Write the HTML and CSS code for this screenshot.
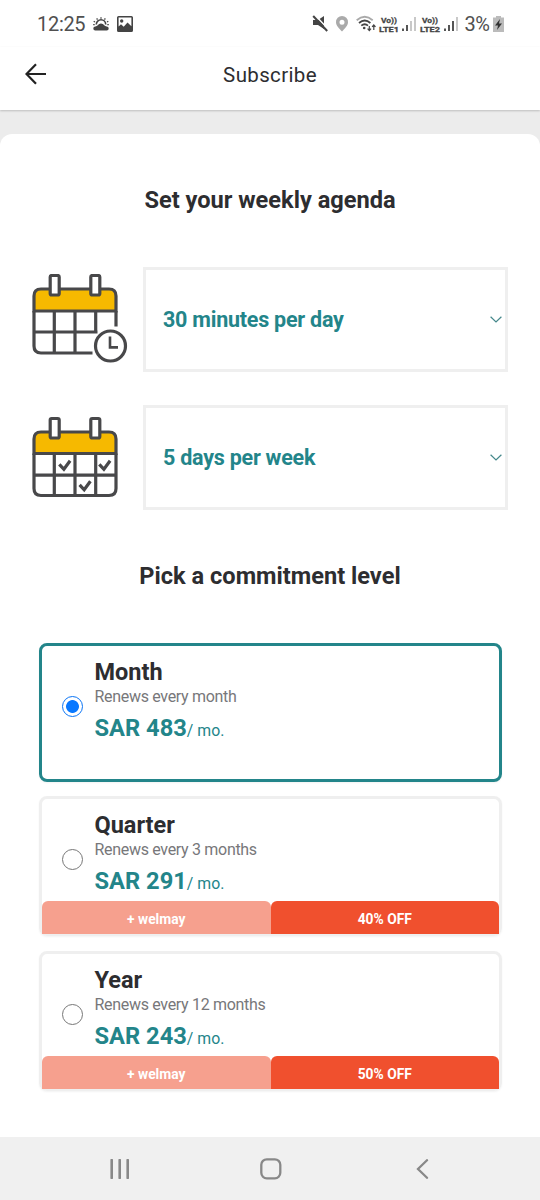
FILE: index.html
```html
<!DOCTYPE html>
<html lang="en">
<head>
<meta charset="utf-8">
<title>Subscribe</title>
<link rel="stylesheet" href="styles.css">
</head>
<body>
<div class="screen">
  <div class="status">
    <span class="clock">12:25</span>
    <svg class="weather" width="18" height="18" viewBox="0 0 18 18"><path d="M3.300 15.500a2 2 0 0 1 0-4c1.200-.2 1.600-.4 2.400-1.200a4 4 0 0 1 6.600 0c.8.800 1.200 1 2.400 1.200a2 2 0 0 1 0 4z" fill="#444"/><path d="M4.300 9.400a4.700 4.700 0 0 1 9.400 0" fill="none" stroke="#444" stroke-width="1.600"/><path d="M9 3.700V2.200M5.500 4.600L4.700 3.300M12.500 4.600l.8-1.300M3 7L1.700 6.200M15 7l1.300-.8M2.700 9.700H1.200M15.300 9.700h1.500" stroke="#444" stroke-width="1.300"/></svg>
    <svg class="photo" width="16" height="16" viewBox="0 0 16 16"><path fill="#444" fill-rule="evenodd" d="M1.600 0h12.800Q16 0 16 1.600v12.800q0 1.600-1.600 1.600H1.600Q0 16 0 14.400V1.600Q0 0 1.600 0zM1.600 1.600v8.800L4 8.200l2.700 2.500 3.800-4.200 3.900 3.700V1.600zM3 5a1.700 1.700 0 1 0 3.400 0A1.700 1.700 0 1 0 3 5z"/></svg>
    <span class="spacer"></span>
    <svg class="signals" width="150" height="20" viewBox="312 13 150 20">
      <path d="M313 19h5l6-4v13l-6-4h-5z" fill="#444"/>
      <path d="M314.500 13.500l14 15" stroke="#fff" stroke-width="1.500"/><path d="M313.200 15l14 15" stroke="#444" stroke-width="2"/>
      <path fill="#aaa" fill-rule="evenodd" d="M342 15a6 6 0 0 1 6 6.200c0 3.400-3.300 6.300-6 9.300-2.700-3-6-5.900-6-9.300A6 6 0 0 1 342 15zm0 3.700a2.500 2.500 0 1 0 0 5 2.500 2.500 0 0 0 0-5z"/>
      <g fill="none" stroke-width="1.800"><path d="M356.700 19.200q8-6.800 16 0" stroke="#aaa"/><path d="M359 22q5.700-4.900 11.400 0M361.300 24.600q3.400-2.600 6.700 0" stroke="#444"/></g>
      <circle cx="364.200" cy="27" r="1.300" fill="#444"/>
      <path d="M369.300 25v4.200m-1.700-1.600l1.700 1.900 1.700-1.900M373.800 29v-4.800m-1.700 1.700l1.700-1.900 1.700 1.900" fill="none" stroke="#444" stroke-width="1.200"/>
      <text class="volte" x="381" y="21.600" textLength="16" lengthAdjust="spacingAndGlyphs">Vo))</text><text class="volte" x="379" y="31" textLength="20" lengthAdjust="spacingAndGlyphs">LTE1</text>
      <path d="M403 27.500V30M407 24v6" stroke="#444" stroke-width="1.800"/><path d="M411 20v10M415 16v14" stroke="#bbb" stroke-width="1.600"/>
      <text class="volte" x="422" y="21.600" textLength="16" lengthAdjust="spacingAndGlyphs">Vo))</text><text class="volte" x="420" y="31" textLength="20" lengthAdjust="spacingAndGlyphs">LTE2</text>
      <path d="M445 27.500V30M449 24v6M453 20v10" stroke="#444" stroke-width="1.800"/><path d="M457 16v14" stroke="#bbb" stroke-width="1.600"/>
    </svg>
    <span class="percent">3%</span>
    <svg class="battery" width="11" height="16" viewBox="0 0 11 16"><path d="M3 0h5v1.500h3V16H0V1.500h3z" fill="#bbb"/><path d="M7 3L2 9.500h3L4 14l5-6.500H6z" fill="#333"/></svg>
  </div>
  <header class="appbar">
    <svg class="back" width="22" height="22" viewBox="0 0 22 22"><path d="M21 11H2M11 1.300L1.500 11l9.500 9.700" fill="none" stroke="#222" stroke-width="2.200"/></svg>
    <h1 class="title">Subscribe</h1>
  </header>
  <main class="body">
    <div class="sheet">
      <h2 class="heading">Set your weekly agenda</h2>
      <div class="row">
        <svg class="calendar" width="97" height="92" viewBox="31 274 97 92">
          <g fill="none" stroke="#48484a" stroke-width="3.200">
            <path d="M34 311v-15q0-7 7-7h68q7 0 7 7v15z" fill="#f6b900"/>
            <path d="M116 311v15.500M34 311v35q0 7 7 7h51.500M34 332h63.500M54.300 311v42M75 311v42M95.700 311v22"/>
            <rect x="50.200" y="275.500" width="9" height="19.500" rx="1.500" fill="#fff"/><rect x="90.800" y="275.500" width="9" height="19.500" rx="1.500" fill="#fff"/>
            <circle cx="110.500" cy="346" r="15" fill="#fff"/><path d="M110 336.500V347.400h8" stroke-width="2.600"/>
          </g>
        </svg>
        <div class="select"><span>30 minutes per day</span><svg width="12" height="7" viewBox="0 0 12 7"><path d="M.6.800L6 6 11.400.800" fill="none" stroke="#45888b" stroke-width="1.200"/></svg></div>
      </div>
      <div class="row">
        <svg class="calendar" width="97" height="92" viewBox="31 412 97 92">
          <g fill="none" stroke="#48484a" stroke-width="3.200">
            <path d="M34 453.500v-14.500q0-7 7-7h68q7 0 7 7v14.500z" fill="#f6b900"/>
            <path d="M34 453.500V488.500q0 7 7 7h68q7 0 7-7v-35M34 475.200h82M54.300 453.500v42M75 453.500v42M95.700 453.500v42"/>
            <rect x="50.200" y="418.500" width="9" height="19.500" rx="1.500" fill="#fff"/><rect x="90.800" y="418.500" width="9" height="19.500" rx="1.500" fill="#fff"/>
            <path d="M59.300 464.300l4.600 5 6.200-8.500M99.300 464.300l4.600 5 6.200-8.500M79.600 484.800l4.600 5 6.200-8.500"/>
          </g>
        </svg>
        <div class="select"><span>5 days per week</span><svg width="12" height="7" viewBox="0 0 12 7"><path d="M.6.800L6 6 11.400.800" fill="none" stroke="#45888b" stroke-width="1.200"/></svg></div>
      </div>
      <h2 class="heading second">Pick a commitment level</h2>
      <div class="plan selected">
        <div class="details"><span class="radio"></span><div>
          <h3 class="name">Month</h3><p class="renews">Renews every month</p><p class="price"><b>SAR 483</b>/ mo.</p>
        </div></div>
      </div>
      <div class="plan">
        <div class="details"><span class="radio"></span><div>
          <h3 class="name">Quarter</h3><p class="renews">Renews every 3 months</p><p class="price"><b>SAR 291</b>/ mo.</p>
        </div></div>
        <div class="offers"><span class="bonus">+ welmay</span><span class="discount">40% OFF</span></div>
      </div>
      <div class="plan">
        <div class="details"><span class="radio"></span><div>
          <h3 class="name">Year</h3><p class="renews">Renews every 12 months</p><p class="price"><b>SAR 243</b>/ mo.</p>
        </div></div>
        <div class="offers"><span class="bonus">+ welmay</span><span class="discount">50% OFF</span></div>
      </div>
    </div>
  </main>
  <nav class="navbar">
    <svg width="20" height="20" viewBox="0 0 20 20"><path d="M1.700 1v18M9.700 1v18M17.700 1v18" stroke="#888" stroke-width="2.600" stroke-linecap="round"/></svg>
    <svg width="22" height="22" viewBox="0 0 22 22"><rect x="1.300" y="1.300" width="19" height="19" rx="5.500" fill="none" stroke="#888" stroke-width="2.300"/></svg>
    <svg width="13" height="20" viewBox="0 0 13 20"><path d="M11 1.200L2 10l9 8.800" fill="none" stroke="#888" stroke-width="2.300" stroke-linecap="round"/></svg>
  </nav>
</div>
</body>
</html>
```

FILE: styles.css
```css
* { box-sizing: border-box; }
body, h1, h2, h3, p { margin: 0; }
body { font-family: Roboto, "Liberation Sans", sans-serif; color: #2d2d30; background: #fff; }
svg { display: block; flex: none; }
.screen { width: 540px; height: 1200px; display: flex; flex-direction: column; overflow: hidden; }
.status { height: 47px; display: flex; align-items: center; padding: 0 36.500px 0 37px; flex: none; }
.clock { font-size: 20px; color: #505050; width: 55px; letter-spacing: -.3px; }
.photo { margin-left: 7px; }
.spacer { flex: 1; }
.percent { font-size: 20px; color: #505050; width: 27px; margin-left: 2.500px; letter-spacing: -.5px; }
.battery { margin-left: 1px; }
.volte { font: 700 8px Roboto, sans-serif; fill: #444; stroke: #444; stroke-width: .3px; }
.appbar { height: 63px; display: grid; grid-template-columns: 47px 1fr 47px; align-items: center; background: #fff; box-shadow: 0 1px 2px rgba(0,0,0,.2); flex: none; padding-bottom: 8px; position: relative; }
.back { margin-left: 25px; margin-bottom: 1px; }
.title { font-size: 20.500px; font-weight: 400; text-align: center; letter-spacing: .35px; }
.body { flex: 1; background: #ececec; padding-top: 24px; }
.sheet { background: #fff; height: 1003px; border-radius: 12px 12px 0 0; padding: 50px 32px 0; }
.heading { font-size: 23.600px; line-height: 32px; height: 32px; text-align: center; margin-bottom: 51px; }
.second { margin: 50px 0 51px; }
.row { display: flex; align-items: center; height: 105px; margin-bottom: 33px; }
.calendar { margin-left: -1px; margin-right: 14.500px; }
.select { flex: 1; height: 105px; border: 3px solid #efefef; display: flex; align-items: center; justify-content: space-between; padding: 0 3px 0 17.500px; color: #23858a; font-size: 21.500px; letter-spacing: -.24px; font-weight: 700; }
.select span { margin-bottom: 1px; }
.plan { height: 140px; margin: 0 6px 15px 7px; border: 3px solid #efefef; border-radius: 8px; display: flex; flex-direction: column; justify-content: space-between; box-shadow: 0 1px 2px rgba(0,0,0,.05); }
.selected { height: 139px; margin-bottom: 14px; border-color: #23858a; }
.details { display: flex; align-items: center; padding: 10px 0 0 19.500px; gap: 12px; }
.radio { width: 21px; height: 21px; border: 1.500px solid #777; border-radius: 50%; margin-top: 10px; }
.selected .radio { border-color: #0a74f5; background: radial-gradient(circle, #0878ff 0 6px, #fff 6.800px); }
.name { font-size: 23.500px; line-height: 32px; }
.renews { font-size: 16px; letter-spacing: -.31px; line-height: 17px; color: #77777a; }
.price { font-size: 15.800px; line-height: 32px; height: 41px; padding-top: 7px; color: #23858a; }
.price b { font-size: 23.700px; line-height: 32px; }
.offers { display: flex; height: 33px; }
.offers span { flex: 1; display: flex; align-items: center; justify-content: center; border-radius: 6px 6px 0 0; color: #fff; font-size: 13.800px; font-weight: 700; padding-top: 2px; }
.offers .bonus { background: #f6a08e; }
.offers .discount { background: #f0502e; }
.offers { margin-bottom: -1px; }
.navbar { height: 63px; flex: none; background: #f0f0f0; display: grid; grid-template-columns: 1fr 22px 1fr; align-items: center; padding: 1px 111px 0 110px; }
.navbar svg:nth-child(2) { margin-left: 1px; }
.navbar svg:last-child { justify-self: end; }
```
